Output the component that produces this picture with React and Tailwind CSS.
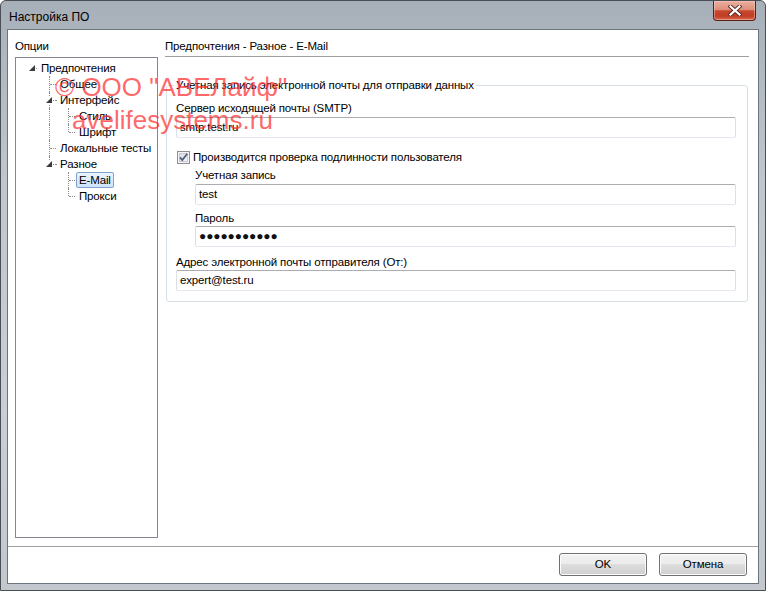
const FONT = "font-['Liberation_Sans','Noto_Sans',sans-serif]";

function Triangle() {
  return (
    <svg width="6" height="6" viewBox="0 0 6 6" className="block">
      <polygon points="6,0 6,6 0,6" fill="#3b3b3b" />
    </svg>
  );
}

function CheckBox() {
  return (
    <svg width="13" height="13" viewBox="0 0 13 13" className="block">
      <defs>
        <linearGradient id="cbg" x1="0" y1="0" x2="1" y2="1">
          <stop offset="0" stopColor="#d9dde3" />
          <stop offset="1" stopColor="#f7f7f7" />
        </linearGradient>
      </defs>
      <rect x="0.5" y="0.5" width="12" height="12" fill="#f4f4f4" stroke="#8e8f8f" />
      <rect x="2.5" y="2.5" width="8" height="8" fill="url(#cbg)" stroke="#c8ccd2" />
      <path d="M3 6.3 L5.3 9 L10.2 2.8" fill="none" stroke="#4f5f82" strokeWidth="1.8" />
    </svg>
  );
}

function CloseButton() {
  return (
    <div className="absolute right-[9px] top-0 flex h-[20px] w-[43px] items-center justify-center rounded-b-[4px] border border-t-0 border-[#5a2016] bg-[linear-gradient(#eab0a0,#de8f7b_45%,#c8472f_52%,#c23e25_80%,#d66a4d)] shadow-[inset_0_0_0_1px_rgba(255,210,200,0.45)]">
      <svg width="14" height="11" viewBox="0 0 14 11">
        <path d="M2.5 1.5 L11.5 9.5 M11.5 1.5 L2.5 9.5" stroke="#5b2a22" strokeWidth="4" strokeLinecap="square" />
        <path d="M2.5 1.5 L11.5 9.5 M11.5 1.5 L2.5 9.5" stroke="#ffffff" strokeWidth="2.2" strokeLinecap="square" />
      </svg>
    </div>
  );
}

function Cell({ type, first, exp }) {
  return (
    <div className={`relative h-4 shrink-0 ${first ? "w-[17px]" : "w-[19px]"}`}>
      {type ? (
        <span
          className={`absolute top-0 border-l border-dotted border-[#8c8c8c] ${first ? "left-[9px]" : "left-[11px]"} ${type === "L" ? "h-[8px]" : "h-4"}`}
        />
      ) : null}
      {type === "T" || type === "L" ? (
        <span
          className={`absolute top-[8px] w-[6px] border-t border-dotted border-[#8c8c8c] ${first ? "left-[10px]" : "left-[12px]"}`}
        />
      ) : null}
      {exp ? (
        <span className="absolute left-[5px] top-[4px] flex h-[8px] w-[8px] items-center justify-center bg-white">
          <Triangle />
        </span>
      ) : null}
      {exp ? <span className="absolute left-[16px] top-[8px] h-px w-px bg-[#8c8c8c]" /> : null}
    </div>
  );
}

function TreeLabel({ text, sel }) {
  return (
    <span
      className={`h-4 whitespace-nowrap rounded-[2px] border px-[2px] leading-[14px] ${sel ? "border-[#7da2ce] bg-[linear-gradient(#ebf4fd,#cfe3fc)]" : "border-transparent"}`}
    >
      {text}
    </span>
  );
}

const rows = [
  { cells: ["T"], text: "Общее" },
  { cells: ["T"], exp: true, text: "Интерфейс" },
  { cells: ["I", "T"], text: "Стиль" },
  { cells: ["I", "L"], text: "Шрифт" },
  { cells: ["T"], text: "Локальные тесты" },
  { cells: ["L"], exp: true, text: "Разное" },
  { cells: ["", "T"], text: "E-Mail", sel: true },
  { cells: ["", "L"], text: "Прокси" },
];

function Input({ children, dots }) {
  return (
    <div className="h-[21px] rounded-[2px] border border-[#abadb3] border-b-[#e3e9ef] border-l-[#dbdfe6] border-r-[#dbdfe6] bg-white px-[3px] leading-[19px]">
      {dots ? <span className="text-[12px] tracking-[-0.1px] text-[#111]">●●●●●●●●●●●</span> : children}
    </div>
  );
}

function WinButton({ children }) {
  return (
    <button className="h-[23px] w-[88px] rounded-[3px] border border-[#707070] bg-[linear-gradient(#f2f2f2,#ebebeb_50%,#dddddd_50%,#cfcfcf)] text-[11.5px] leading-[21px] tracking-[-0.15px] text-black shadow-[inset_0_0_0_1px_#fcfcfc]">
      {children}
    </button>
  );
}

export default function App() {
  return (
    <div className={`h-[591px] w-[766px] text-[11.5px] leading-4 tracking-[-0.15px] text-black ${FONT}`}>
      <div className="relative flex h-full flex-col rounded-t-[6px] border border-[#4a4f55] bg-[linear-gradient(#a7b0b9,#bfc6cd_30%,#c9cfd5_70%,#c2c8ce)] px-[6px] pb-[6px]">
        <div className="flex h-[28px] items-center pl-[2px] pt-[4px] text-[12px] tracking-normal">Настройка ПО</div>
        <CloseButton />

        <div className="flex flex-1 flex-col border border-[#6c747c] bg-white">
          <div className="flex flex-1 px-[7px] pb-[8px] pt-[8px]">
            {/* left: tree */}
            <div className="flex w-[143px] shrink-0 flex-col">
              <div className="h-4">Опции</div>
              <div className="mt-[3px] flex-1 border border-[#828790] pt-[2px]">
                <div className="flex h-4 items-center pl-[13px]">
                  <Triangle />
                  <span className="ml-[1px] h-px w-px bg-[#8c8c8c]" />
                  <span className="ml-[1px]">
                    <TreeLabel text="Предпочтения" />
                  </span>
                </div>
                {rows.map((r) => (
                  <div key={r.text} className="flex h-4 items-center">
                    <div className="w-[24px] shrink-0" />
                    {r.cells.map((c, i) => (
                      <Cell key={i} type={c} first={i === 0} exp={r.exp && i === r.cells.length - 1} />
                    ))}
                    <TreeLabel text={r.text} sel={r.sel} />
                  </div>
                ))}
              </div>
            </div>

            {/* right: settings page */}
            <div className="ml-[7px] mr-[2px] flex flex-1 flex-col">
              <div className="h-[19px] border-b border-[#a0a0a0] pb-[3px]">Предпочтения - Разное - E-Mail</div>
              <fieldset className="mx-[1px] mt-[20px] rounded-[3px] border border-[#d5dfe5] pb-[10px] pl-[9px] pr-[11px]">
                <legend className="-ml-[2px] h-4 px-[2px] leading-4">Учетная запись электронной почты для отправки данных</legend>
                <div className="mt-[7px] h-4">Сервер исходящей почты (SMTP)</div>
                <div className="mt-[1px]">
                  <Input>smtp.test.ru</Input>
                </div>
                <div className="mt-[11px] flex h-4 items-center">
                  <div className="ml-[1px]">
                    <CheckBox />
                  </div>
                  <span className="ml-[3px]">Производится проверка подлинности пользователя</span>
                </div>
                <div className="ml-[19px]">
                  <div className="mt-[2px] h-4">Учетная запись</div>
                  <div className="mt-[1px]">
                    <Input>test</Input>
                  </div>
                  <div className="mt-[5px] h-4">Пароль</div>
                  <Input dots />
                </div>
                <div className="mt-[7px] h-4">Адрес электронной почты отправителя (От:)</div>
                <Input>expert@test.ru</Input>
              </fieldset>
            </div>
          </div>

          <div className="flex h-[37px] shrink-0 justify-end gap-[12px] border-t border-[#a0a0a0] pr-[11px] pt-[6px]">
            <WinButton>OK</WinButton>
            <WinButton>Отмена</WinButton>
          </div>
        </div>

        {/* watermark */}
        <div className="pointer-events-none absolute left-[54px] top-[71px] font-['Liberation_Sans',Arial,sans-serif] text-[26px] leading-[30px] tracking-normal text-[rgba(255,45,45,0.72)]">
          <div className="whitespace-nowrap">© ООО "АВЕЛайф"</div>
          <div className="ml-[17px] mt-[3px] whitespace-nowrap">avelifesystems.ru</div>
        </div>
      </div>
    </div>
  );
}
